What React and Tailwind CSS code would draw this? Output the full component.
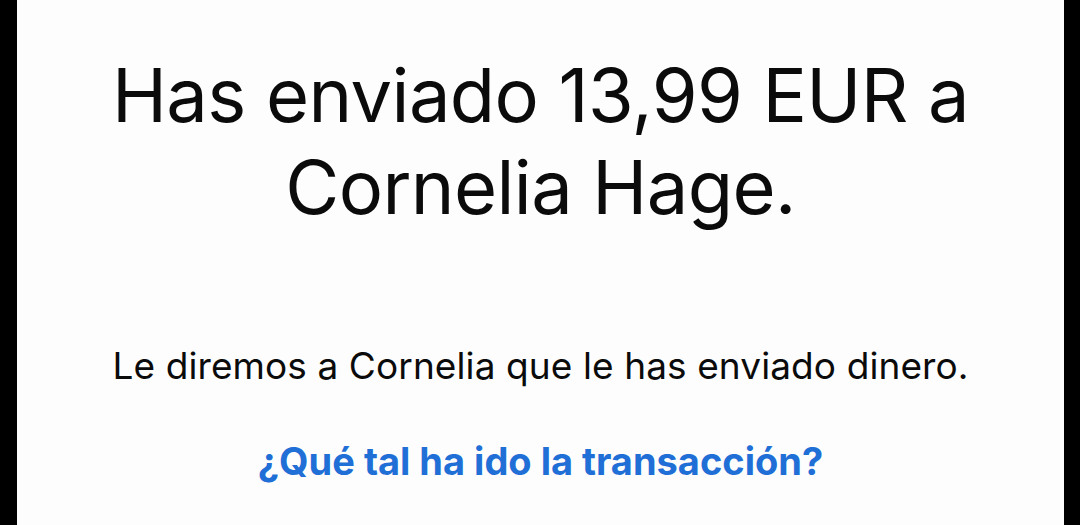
export default function App() {
  return (
    <div className="flex h-[525px] w-[1080px] bg-black">
      <main className="mr-[16px] ml-[17px] flex flex-1 flex-col items-center bg-[#fdfdfd] pt-[49px] text-center font-['Inter',sans-serif] text-[#0b0b0b]">
        <h1 className="text-[74px] font-normal leading-[92px] tracking-[-0.6px]">
          Has enviado 13,99 EUR a
          <br />
          Cornelia Hage.
        </h1>
        <p className="mt-[111px] text-[37px] leading-[44px] tracking-[0.1px]">
          Le diremos a Cornelia que le has enviado dinero.
        </p>
        <a href="#" className="mt-[51px] text-[38px] font-bold leading-[44px] text-[#1f6fd6]">
          ¿Qué tal ha ido la transacción?
        </a>
      </main>
    </div>
  );
}
